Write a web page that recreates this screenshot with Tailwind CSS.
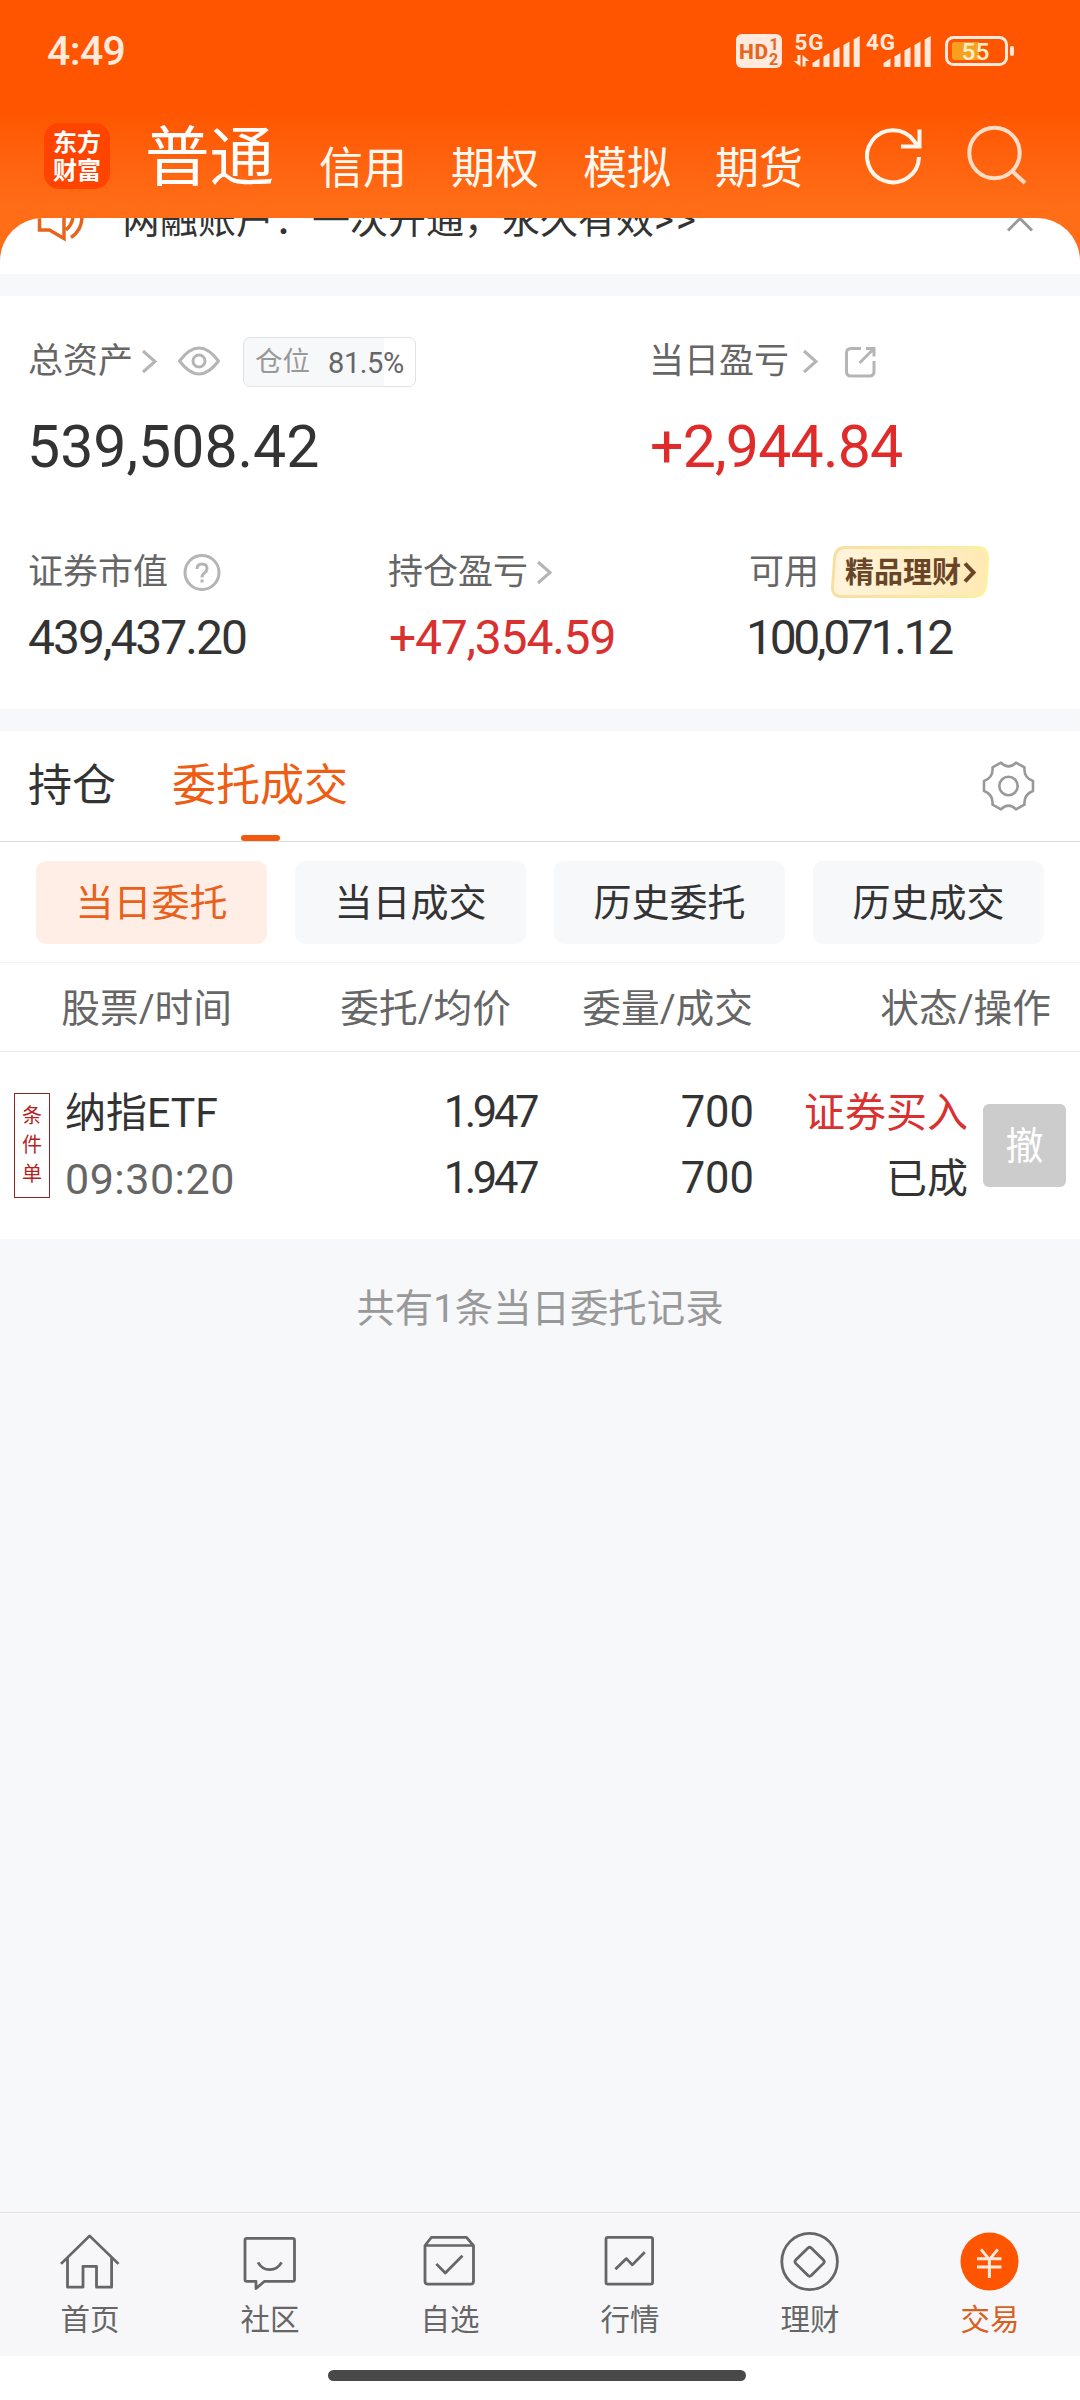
<!DOCTYPE html>
<html lang="zh-CN">
<head>
<meta charset="utf-8">
<title>交易</title>
<script src="https://cdn.jsdelivr.net/npm/@tailwindcss/browser@4"></script>
</head>
<body class="w-[1080px] h-[2400px] overflow-hidden flex flex-col bg-[#f7f8fa] text-[#333] whitespace-nowrap font-['Roboto','Noto_Sans_CJK_SC',sans-serif]">

<header class="h-[218px] shrink-0 flex flex-col bg-linear-to-b from-[#ff5500] from-50% to-[#ff6d17] to-95%">
  <!-- status bar -->
  <div class="h-[102px] flex items-center justify-between pl-[47px] pr-[66px]">
    <span class="text-[41px] font-medium leading-none text-[#ffeadd] tracking-[-0.6px]">4:49</span>
    <svg class="w-[280px] h-[60px]" viewBox="734 21 280 60" fill="#ffeadd">
      <rect x="736" y="34" width="46" height="34" rx="6"/>
      <text x="739" y="58.500" font-size="21" font-weight="800" fill="#e8651f" textLength="29">HD</text>
      <text x="769.500" y="50" font-size="16" font-weight="700" fill="#e8651f">1</text>
      <text x="769" y="64.500" font-size="16" font-weight="700" fill="#e8651f">2</text>
      <text x="794.500" y="50" font-size="22.500" font-weight="700" textLength="29">5G</text>
      <path d="M797.500 55H800.500V66.500L793.500 61H797.500ZM802.500 55L809.500 61H805.500V66.500H802.500Z"/>
      <path d="M812.500 67V63L819.500 58.500V67ZM823.500 67V56.500L829.500 53V67ZM833.500 67V50.500L839.500 47V67ZM843.500 67V45L849.500 41.500V67ZM853.700 67V39.500L859.700 36V67Z"/>
      <text x="866" y="50" font-size="22.500" font-weight="700" textLength="29">4G</text>
      <path d="M883.500 67V63L890.500 58.500V67ZM894.500 67V56.500L900.500 53V67ZM904.500 67V50.500L910.500 47V67ZM914.500 67V45L920.500 41.500V67ZM924.700 67V39.500L930.700 36V67Z"/>
      <rect x="946.500" y="37.500" width="60" height="27" rx="7" fill="none" stroke="#ffeadd" stroke-width="3"/>
      <path d="M955 42H979V60H955Q952 60 952 57V45Q952 42 955 42Z" fill="#f7a01f"/>
      <rect x="1010" y="46" width="4" height="10" rx="2"/>
      <text x="975.500" y="60.300" font-size="24.500" font-weight="500" text-anchor="middle" fill="#ffefc8">55</text>
    </svg>
  </div>
  <!-- account tabs -->
  <div class="h-[116px] flex items-start pl-[44px]">
    <div class="mt-[21px] w-[66px] h-[66px] rounded-[15px] bg-[#ff4400] text-white font-bold text-[24px] leading-[28px] text-center pt-[6px]">东方<br>财富</div>
    <div class="ml-[35px] mt-[16px] text-[64.500px] leading-[80px] w-[130px] text-white">普通</div>
    <nav class="ml-[44px] mt-[37px] flex gap-[44px] text-[44px] leading-[60px] text-[#fff8f0]">
      <span>信用</span><span>期权</span><span>模拟</span><span>期货</span>
    </nav>
    <svg class="ml-[58px] mt-[19px] w-[66px] h-[70px]" viewBox="860 121 66 70" fill="none" stroke="#fff6ee" stroke-width="4">
      <path d="M918 157A26 26 0 1 1 913 141L917 146M918.500 129.500V146.500H900"/>
    </svg>
    <svg class="ml-[37px] mt-[19px] w-[66px] h-[70px]" viewBox="964 121 66 70" fill="none" stroke="#ffdcc6" stroke-width="4">
      <circle cx="994.500" cy="153" r="25.200"/><path d="M1011.500 170.500L1025 183"/>
    </svg>
  </div>
</header>

<!-- notice bar, scrolled partly beneath the header -->
<div class="h-[56px] shrink-0 bg-[#ff6d17]">
  <div class="h-[56px] rounded-t-[43px] bg-white overflow-hidden flex items-start">
    <svg class="ml-[34px] w-[56px] h-[30px]" viewBox="34 218 56 30" fill="none" stroke="#e8641c" stroke-width="3.500">
      <path d="M39.500 208V230H49.500L64 238.500V203M66 230Q73 224 73 215M71 237.500Q82.500 230 82 215"/>
    </svg>
    <span class="ml-[32px] -mt-[24px] w-[860px] text-[38px] leading-[52px]">两融账户：一次开通，永久有效<span class="tracking-[2px]">&gt;&gt;</span></span>
    <svg class="ml-[22px] w-[32px] h-[20px]" viewBox="1004 218 32 20" fill="none" stroke="#999" stroke-width="3"><path d="M1008 230.500L1020 218.500L1032 230.500"/></svg>
  </div>
</div>

<!-- assets summary -->
<section class="mt-[22px] h-[413px] shrink-0 bg-white pl-[28px] flex flex-col">
  <div class="mt-[41px] h-[50px] flex items-center text-[35px] leading-[50px] text-[#666]">
    <div class="w-[621px] flex items-center">
      <span>总资产</span>
      <svg class="ml-[7px] w-[20px] h-[28px]" viewBox="140 348 20 28" fill="none" stroke="#b5b5b5" stroke-width="3"><path d="M143 351L155 361.500L143 372"/></svg>
      <svg class="ml-[17px] w-[44px] h-[32px]" viewBox="177 346 44 32" fill="none" stroke="#b5b5b5" stroke-width="3"><path d="M179.500 361Q199 335 218.500 361Q199 387 179.500 361Z" stroke-linejoin="round"/><circle cx="199" cy="361" r="6"/></svg>
      <div class="ml-[22px] w-[173px] h-[50px] rounded-[7px] border border-[#e2e2e2] overflow-hidden bg-linear-to-r from-[#f7f8fa] from-[82%] to-white to-[82%] flex items-center leading-[50px] pl-[11px]">
        <span class="text-[27.5px] text-[#999]">仓位</span><span class="ml-[18px] pt-[1px] text-[29px] tracking-[-0.4px]">81.5%</span>
      </div>
    </div>
    <span>当日盈亏</span>
    <svg class="ml-[12px] w-[20px] h-[28px]" viewBox="801 348 20 28" fill="none" stroke="#b5b5b5" stroke-width="3"><path d="M804 351L816 361.500L804 372"/></svg>
    <svg class="ml-[22px] w-[34px] h-[34px]" viewBox="843 345 34 34" fill="none" stroke="#b5b5b5" stroke-width="3"><path d="M861 348.500H851Q846.500 348.500 846.500 353V371.500Q846.500 376 851 376H869.500Q874 376 874 371.500V361M866 348.500H874V356.500M874 348.500L859.500 363"/></svg>
  </div>
  <div class="mt-[24px] h-[72px] flex text-[59px] leading-[72px]">
    <span class="w-[622px] -ml-[1px] mr-px tracking-[0px]">539,508.42</span>
    <span class="text-[#e02b2b] tracking-[-0.8px]">+2,944.84</span>
  </div>
  <div class="mt-[64px] h-[52px] flex items-center text-[35px] leading-[52px] text-[#666]">
    <div class="w-[360px] flex items-center">
      <span>证券市值</span>
      <svg class="ml-[15px] w-[38px] h-[40px]" viewBox="183.500 553 38 40" fill="none" stroke="#b5b5b5" stroke-width="3"><circle cx="202.500" cy="572.500" r="17"/><path d="M197.500 569Q197.500 564 202.500 564Q207.500 564 207.500 568.500Q207.500 571 205 573Q202.500 574.500 202.500 577.500M202.500 579.500V582.500"/></svg>
    </div>
    <div class="w-[361px] flex items-center">
      <span>持仓盈亏</span>
      <svg class="ml-[7px] w-[20px] h-[28px]" viewBox="535 559 20 28" fill="none" stroke="#b5b5b5" stroke-width="3"><path d="M538 562L550 572.500L538 583"/></svg>
    </div>
    <span>可用</span>
    <div class="relative ml-[12px] w-[158px] h-[52px] flex items-center">
      <svg class="absolute -top-px left-0 w-[158px] h-[52px]" viewBox="831 546 158 52">
        <defs>
          <linearGradient id="gold" x1="0" x2="1"><stop offset="0" stop-color="#fff4dc"/><stop offset="1" stop-color="#ffe9b4"/></linearGradient>
          <linearGradient id="rim" x1="0" x2="1"><stop offset="0" stop-color="#f7dfa2"/><stop offset="1" stop-color="#fbf1a0"/></linearGradient>
        </defs>
        <path d="M845 547.500H977Q988 547.500 987.500 558L986 584Q985 596.500 973 596.500H842Q832 596.500 832.500 587L834.500 559Q835.500 547.500 845 547.500Z" fill="url(#gold)" stroke="url(#rim)" stroke-width="3"/>
        <path d="M965 563.500L973.500 572.500L965 581.500" fill="none" stroke="#694528" stroke-width="4"/>
      </svg>
      <span class="relative ml-[14px] text-[29px] font-bold text-[#694528]">精品理财</span>
    </div>
  </div>
  <div class="mt-[9px] h-[60px] flex text-[48px] leading-[60px]">
    <span class="w-[361px] tracking-[-2px]">439,437.20</span>
    <span class="w-[360px] text-[#d93030] tracking-[-1.2px]">+47,354.59</span>
    <span class="tracking-[-3.3px] -ml-[3px]">100,071.12</span>
  </div>
</section>

<!-- orders -->
<section class="mt-[22px] h-[508px] shrink-0 bg-white flex flex-col">
  <div class="h-[111px] border-b border-[#ddd] flex text-[44px] leading-[111px] pl-[28px]">
    <span>持仓</span>
    <div class="ml-[56px] w-[176px] flex flex-col items-center text-[#ee5d13]">
      <span class="h-[104px]">委托成交</span>
      <i class="w-[39px] h-[6px] shrink-0 rounded-full bg-[#f2590e]"></i>
    </div>
    <svg class="ml-[633px] mt-[28px] w-[54px] h-[54px]" viewBox="-27.500 -27 54 54" fill="none" stroke="#999" stroke-width="2.600" stroke-linejoin="round"><path d="M-7.500-23.300Q0-16 7.500-23.300L16-18.700Q15-8.500 24.500-5V5Q15 8.500 16 18.700L7.500 23.300Q0 16-7.500 23.300L-16 18.700Q-15 8.500-24.500 5V-5Q-15-8.500-16-18.700Z"/><circle r="9.200"/></svg>
  </div>
  <div class="h-[121px] border-b border-[#f5f5f5] px-[36px] pt-[19px]">
    <div class="grid grid-cols-4 gap-[28px] text-center text-[38px] leading-[84px]">
      <span class="h-[83px] rounded-[10px] bg-[#ffeee6] text-[#e8601a]">当日委托</span>
      <span class="h-[83px] rounded-[10px] bg-[#f7f8fa]">当日成交</span>
      <span class="h-[83px] rounded-[10px] bg-[#f7f8fa]">历史委托</span>
      <span class="h-[83px] rounded-[10px] bg-[#f7f8fa]">历史成交</span>
    </div>
  </div>
  <div class="h-[89px] border-b border-[#ececec] pl-[61px] pr-[29px] grid grid-cols-[171px_279px_242px_298px] text-right text-[38.7px] leading-[91px] text-[#666]">
    <span>股票/时间</span><span>委托/均价</span><span>委量/成交</span><span>状态/操作</span>
  </div>
  <div class="h-[187px] flex">
    <div class="ml-[14px] mt-[41px] w-[36px] h-[105px] border border-[#8c2626] text-[20px] leading-[29px] text-[#b81f1f] text-center pt-[8px]">条<br>件<br>单</div>
    <div class="ml-[15px] mt-[28px] w-[210px] text-[43px] leading-[66px]">
      <div class="text-[41px]">纳指ETF</div><div class="text-[#666] tracking-[0.5px]">09:30:20</div>
    </div>
    <div class="mt-[28px] w-[261px] text-right text-[43.5px] leading-[66px] tracking-[-3.4px]"><div>1.947</div><div>1.947</div></div>
    <div class="mt-[28px] w-[218px] text-right text-[43.5px] leading-[66px]"><div>700</div><div>700</div></div>
    <div class="mt-[28px] w-[214px] text-right text-[41px] leading-[66px]"><div class="text-[#d93030]">证券买入</div><div>已成</div></div>
    <div class="ml-[15px] mt-[52px] w-[83px] h-[83px] rounded-[6px] bg-[#ccc] text-white text-center text-[38px] leading-[84px]">撤</div>
  </div>
</section>

<main class="flex-1 pt-[40px] text-center text-[38.4px] leading-[60px] text-[#999]">共有1条当日委托记录</main>

<!-- bottom navigation -->
<nav class="h-[144px] shrink-0 border-t border-[#e2e2e4] bg-[#f7f7fa] grid grid-cols-6 justify-items-center text-[29.5px] text-[#666]">
  <div class="flex flex-col items-center"><svg preserveAspectRatio="none" class="mt-[18px] w-[64px] h-[60px]" viewBox="58 2232 64 62" fill="none" stroke="#666" stroke-width="2.800" stroke-linejoin="round"><path d="M61 2266L89.600 2237L118.500 2266M67.500 2260V2290H83V2268.500H96.500V2290H111.600V2260"/></svg><span class="leading-[58px]">首页</span></div>
  <div class="flex flex-col items-center"><svg preserveAspectRatio="none" class="mt-[18px] w-[64px] h-[60px]" viewBox="238 2232 64 62" fill="none" stroke="#666" stroke-width="2.800" stroke-linejoin="round"><path d="M247 2239.600H292.500Q294.500 2239.600 294.500 2241.600V2282Q294.500 2284 292.500 2284H264.500L256 2291.500V2284H247Q245 2284 245 2282V2241.600Q245 2239.600 247 2239.600ZM258 2264.500Q262 2272 269.800 2272T281.500 2264.500"/></svg><span class="leading-[58px]">社区</span></div>
  <div class="flex flex-col items-center"><svg preserveAspectRatio="none" class="mt-[18px] w-[64px] h-[60px]" viewBox="418 2232 64 62" fill="none" stroke="#666" stroke-width="2.800" stroke-linejoin="round"><path d="M425 2247L431.500 2238.500H466.500L473.500 2247V2284Q473.500 2287 470.500 2287H428Q425 2287 425 2284ZM425 2247H473.500M436.300 2266L445.300 2275.400L462.500 2257.500"/></svg><span class="leading-[58px]">自选</span></div>
  <div class="flex flex-col items-center"><svg preserveAspectRatio="none" class="mt-[18px] w-[64px] h-[60px]" viewBox="598 2232 64 62" fill="none" stroke="#666" stroke-width="2.800" stroke-linejoin="round"><rect x="606" y="2238.500" width="46.600" height="48.500" rx="2"/><path d="M615.400 2271.500L626.400 2260.500L632.300 2267L644.700 2254"/></svg><span class="leading-[58px]">行情</span></div>
  <div class="flex flex-col items-center"><svg preserveAspectRatio="none" class="mt-[18px] w-[64px] h-[60px]" viewBox="778 2232 64 62" fill="none" stroke="#666" stroke-width="2.800" stroke-linejoin="round"><ellipse cx="809.600" cy="2263.500" rx="27.800" ry="29"/><path d="M808 2249.500Q809.600 2248 811.200 2249.500L823.500 2262Q825 2263.700 823.500 2265.400L811.200 2278Q809.600 2279.500 808 2278L795.700 2265.400Q794.300 2263.700 795.700 2262Z"/></svg><span class="leading-[58px]">理财</span></div>
  <div class="flex flex-col items-center text-[#d9601f]"><svg preserveAspectRatio="none" class="mt-[18px] w-[64px] h-[60px]" viewBox="958 2232 64 62" fill="none" stroke="#ffe9dd" stroke-width="3"><ellipse cx="989.500" cy="2263.500" rx="29" ry="30" fill="#ff5500" stroke="none"/><path d="M981 2251L989.400 2261.500L997.800 2251M989.400 2261V2280.500M977 2260.600H1001.500M977 2269.200H1001.500"/></svg><span class="leading-[58px]">交易</span></div>
</nav>
<div class="h-[44px] shrink-0 bg-white flex justify-center pt-[14px]"><div class="w-[418px] h-[11px] -ml-[6px] rounded-full bg-[#484848]"></div></div>
</body>
</html>
